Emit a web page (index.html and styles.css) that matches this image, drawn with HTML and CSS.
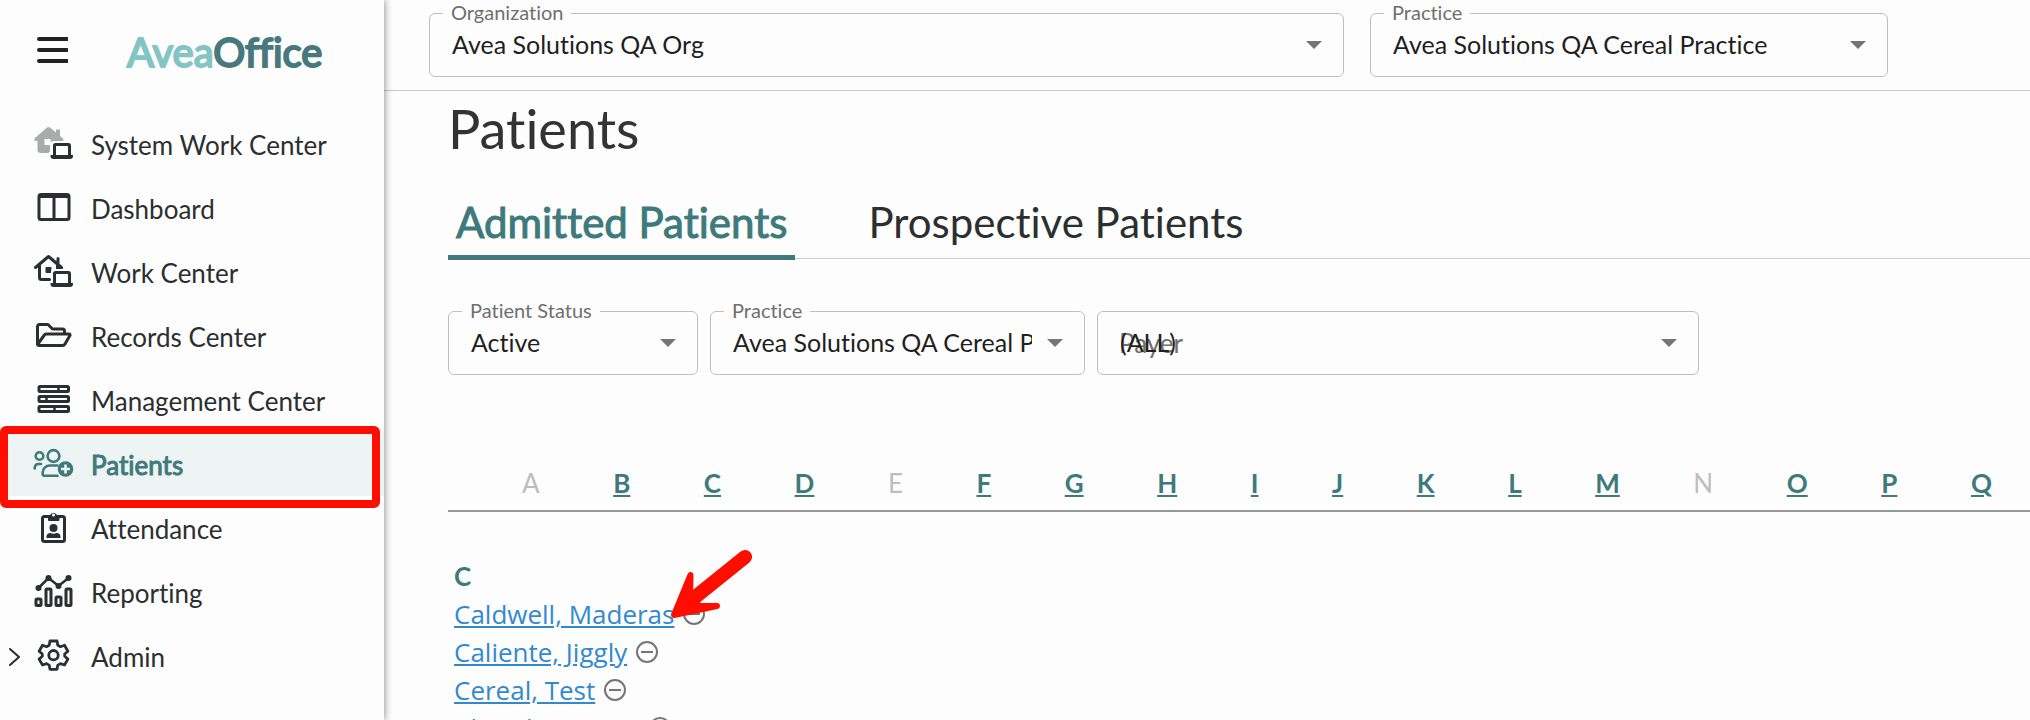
FILE: index.html
```html
<!DOCTYPE html>
<html lang="en">
<head>
  <meta charset="UTF-8" />
  <meta name="viewport" content="width=device-width, initial-scale=1.0"/>
  <title>Patients - AveaOffice</title>
  <link rel="stylesheet" href="styles.css">
</head>
<body>
  <aside class="sidebar">
    <div class="brand">
      <button class="menu-btn" aria-label="Toggle menu">
        <svg width="32" height="28" viewBox="0 0 32 28" fill="none" stroke="#222" stroke-width="4" stroke-linecap="round"><path d="M3 3h28M3 14h28M3 25h28"/></svg>
      </button>
      <a href="#" class="logo">Avea<span>Office</span></a>
    </div>

    <nav class="nav">
      <a href="#">
        <svg class="icon" viewBox="0 0 40 32">
          <path fill="#a9acab" d="M13 .6a2.300 2.300 0 0 1 3 0l6 5V3.500a1 1 0 0 1 1-1h2a1 1 0 0 1 1 1v5.500l3 2.600c1 .9.600 2.400-.8 2.400H19.500a4 4 0 0 0-3 1.500V12h-6v6h5.500v6.500c-.9.400-1.300 1-1.300 1.500H6.500a3 3 0 0 1-3-3v-9H2c-1.600 0-2.500-1.700-1.300-2.700z"/>
          <path fill="none" stroke="#2b2f2f" stroke-width="3" d="M20.500 28V18.500a1 1 0 0 1 1-1h13a1 1 0 0 1 1 1V28"/>
          <path fill="#2b2f2f" d="M16.500 28h22.500v1a3 3 0 0 1-3 3H19.500a3 3 0 0 1-3-3z"/>
        </svg>
        <span>System Work Center</span>
      </a>
      <a href="#">
        <svg class="icon" viewBox="0 0 40 32" fill="none" stroke="currentColor" stroke-width="3">
          <rect x="5" y="3.500" width="30" height="25" rx="2"/>
          <path d="M20 4v24"/>
          <path stroke-width="4" d="M5 5h30"/>
        </svg>
        <span>Dashboard</span>
      </a>
      <a href="#">
        <svg class="icon" viewBox="0 0 40 32">
          <path fill="none" stroke="currentColor" stroke-width="3" stroke-linecap="round" stroke-linejoin="round" d="M1.500 12.500 14.500 1.500l13 11M24 8.500V3.500M5.500 10.500v12a2 2 0 0 0 2 2h8"/>
          <rect x="11.500" y="12" width="6" height="6" rx="1" fill="currentColor"/>
          <path fill="#fdfdfd" d="M17 28V16.500a3 3 0 0 1 3-3h16V28z"/>
          <path fill="currentColor" d="M22 8.500 29.500 14H22z"/>
          <path fill="none" stroke="currentColor" stroke-width="3" d="M20.500 28V18.500a1 1 0 0 1 1-1h13a1 1 0 0 1 1 1V28"/>
          <path fill="currentColor" d="M16.500 28h22.500v1a3 3 0 0 1-3 3H19.500a3 3 0 0 1-3-3z"/>
        </svg>
        <span>Work Center</span>
      </a>
      <a href="#">
        <svg class="icon" viewBox="0 0 40 32" fill="none" stroke="currentColor" stroke-width="3" stroke-linejoin="round">
          <path d="M3.500 25V7.500a2 2 0 0 1 2-2h8.500l4.500 4.500h10a2 2 0 0 1 2 2v3"/>
          <path d="M3.500 25.500 10 16.500a3 3 0 0 1 2.500-1.500H35a1 1 0 0 1 .9 1.600l-4.900 8.400a3 3 0 0 1-2.500 1.500H5a1.500 1.500 0 0 1-1.500-1z"/>
        </svg>
        <span>Records Center</span>
      </a>
      <a href="#">
        <svg class="icon" viewBox="0 0 40 32" fill="none" stroke="currentColor" stroke-width="3">
          <rect x="5" y="3.500" width="29.500" height="5" rx="1"/>
          <rect x="5" y="13.500" width="29.500" height="5" rx="1"/>
          <rect x="5" y="23.500" width="29.500" height="5" rx="1"/>
          <path stroke-width="2.500" d="M24.500 3v6M12.500 13v6M20.500 23v6"/>
        </svg>
        <span>Management Center</span>
      </a>
      <a href="#" class="active">
        <svg class="icon" viewBox="0 0 40 32" fill="none" stroke="currentColor" stroke-width="2.600" stroke-linecap="round" stroke-linejoin="round">
          <circle cx="5.500" cy="9" r="3.800"/>
          <circle cx="19.500" cy="9" r="5.900"/>
          <path d="M.7 21.500v-1.200a4 4 0 0 1 4-3.300H7"/>
          <path d="M23.500 28.700H10.200a1.500 1.500 0 0 1-1.500-1.500v-1.700a7 7 0 0 1 7-7h7.800"/>
          <circle cx="31.500" cy="22" r="7.800" fill="currentColor" stroke="none"/>
          <path stroke="#eef4f4" stroke-linecap="butt" d="M31.500 17.500v9M27 22h9"/>
        </svg>
        <span>Patients</span>
      </a>
      <a href="#">
        <svg class="icon" viewBox="0 0 40 32">
          <rect x="8.500" y="5.500" width="22" height="25" rx="2" fill="none" stroke="currentColor" stroke-width="3"/>
          <path fill="currentColor" d="M14 4h2a4 4 0 0 1 7 0h2.500v5a1 1 0 0 1-1 1H15a1 1 0 0 1-1-1z"/>
          <circle cx="19.500" cy="4" r="1.500" fill="#fdfdfd"/>
          <circle cx="19.500" cy="17" r="4" fill="currentColor"/>
          <path fill="currentColor" d="M12.500 27v-1a4 4 0 0 1 4-4q3 1.500 6 0a4 4 0 0 1 4 4v1z"/>
        </svg>
        <span>Attendance</span>
      </a>
      <a href="#">
        <svg class="icon" viewBox="0 0 40 32" fill="none" stroke="currentColor" stroke-width="3">
          <path stroke-width="2.500" d="M4.500 13 14.500 3l10 8 10-8"/>
          <g fill="currentColor" stroke="none">
            <circle cx="4.500" cy="13" r="3"/><circle cx="14.500" cy="3" r="3"/><circle cx="24.500" cy="11" r="3"/><circle cx="34.500" cy="3" r="3"/>
          </g>
          <rect x="2" y="24" width="5" height="6.500" rx="1"/>
          <rect x="12" y="14" width="5" height="16.500" rx="1"/>
          <rect x="22" y="22" width="5" height="8.500" rx="1"/>
          <rect x="32" y="14" width="5" height="16.500" rx="1"/>
        </svg>
        <span>Reporting</span>
      </a>
      <a href="#">
        <svg class="chevron" viewBox="0 0 12 20" fill="none" stroke="currentColor" stroke-width="2" stroke-linecap="round"><path d="m2 2 9 8-9 8"/></svg>
        <svg class="icon" viewBox="0 0 40 32" fill="none" stroke="currentColor" stroke-width="2.800" stroke-linejoin="round">
          <path d="M16 2h7l.8 4.200 2.700 1.500 4-1.400 3.400 5.900-3.200 2.800v2.300l3.200 2.800-3.400 5.900-4-1.400-2.700 1.500L23 30.300h-7l-.8-4.200-2.700-1.500-4 1.400-3.400-5.900 3.200-2.800V15l-3.200-2.800 3.400-5.900 4 1.400 2.700-1.500z"/>
          <circle cx="19.500" cy="16.200" r="4.700"/>
        </svg>
        <span>Admin</span>
      </a>
    </nav>
  </aside>

  <main class="main">
    <header class="topbar">
      <div class="field">
        <label for="org">Organization</label>
        <select id="org"><option>Avea Solutions QA Org</option></select>
      </div>
      <div class="field">
        <label for="top-practice">Practice</label>
        <select id="top-practice"><option>Avea Solutions QA Cereal Practice</option></select>
      </div>
    </header>

    <div class="content">
      <h1>Patients</h1>

      <div class="tabs" role="tablist">
        <button class="tab selected" role="tab" aria-selected="true">Admitted Patients</button>
        <button class="tab" role="tab" aria-selected="false">Prospective Patients</button>
      </div>

      <div class="filters">
        <div class="field">
          <label for="status">Patient Status</label>
          <select id="status"><option>Active</option></select>
        </div>
        <div class="field">
          <label for="practice">Practice</label>
          <select id="practice"><option>Avea Solutions QA Cereal Practice</option></select>
        </div>
        <div class="field payer">
          <label for="payer">Payer</label>
          <select id="payer"><option>(ALL)</option></select>
        </div>
      </div>

      <div class="letters">
        <span>A</span>
        <a href="#">B</a>
        <a href="#">C</a>
        <a href="#">D</a>
        <span>E</span>
        <a href="#">F</a>
        <a href="#">G</a>
        <a href="#">H</a>
        <a href="#">I</a>
        <a href="#">J</a>
        <a href="#">K</a>
        <a href="#">L</a>
        <a href="#">M</a>
        <span>N</span>
        <a href="#">O</a>
        <a href="#">P</a>
        <a href="#">Q</a>
      </div>

      <section class="group">
        <h2>C</h2>
        <ul>
          <li>
            <a href="#">Caldwell, Maderas</a>
            <button class="remove" aria-label="Remove"></button>
            <!-- Pointer to the first patient -->
            <svg class="arrow" viewBox="0 0 84 70" fill="#ff0d00" stroke="#ff0d00" stroke-linecap="round" stroke-linejoin="round">
              <path stroke-width="14" d="M75 8 24 49"/>
              <path stroke-width="6" d="M4 66 20.500 26 20 50 30 57 47 57z"/>
            </svg>
          </li>
          <li><a href="#">Caliente, Jiggly</a><button class="remove" aria-label="Remove"></button></li>
          <li><a href="#">Cereal, Test</a><button class="remove" aria-label="Remove"></button></li>
          <li><a href="#">Chander, Cesar</a><button class="remove" aria-label="Remove"></button></li>
        </ul>
      </section>
    </div>
  </main>

  <div class="highlight"></div>
</body>
</html>
```
FILE: styles.css
```css
* {
  box-sizing: border-box;
}

html, body {
  margin: 0;
  padding: 0;
  height: 100%;
  overflow: hidden;
}

body {
  display: flex;
  font-family: Lato, sans-serif;
  font-size: 26px;
  font-variant-ligatures: none;
  color: #2b2f2f;
  background: #fdfdfd;
}

button {
  font: inherit;
  font-variant-ligatures: none;
  color: inherit;
  background: none;
  border: none;
  padding: 0;
  cursor: pointer;
}

a {
  color: inherit;
  text-decoration: none;
}

/* Sidebar */
.sidebar {
  position: relative;
  flex: 0 0 384px;
  box-shadow: 0 0 8px rgba(0, 0, 0, 0.5);
  background: #fdfdfd;
  z-index: 2;
}

.brand {
  display: flex;
  align-items: center;
  height: 112px;
  padding: 0 0 13px 36px;
}

.menu-btn svg {
  display: block;
}

.logo {
  margin-left: 59px;
  padding-top: 4px;
  font-size: 40px;
  line-height: 48px;
  color: #83c4c4;
  -webkit-text-stroke: 2px;
}

.logo span {
  color: #47787c;
}

.nav a {
  position: relative;
  display: flex;
  align-items: center;
  gap: 17px;
  height: 64px;
  padding: 2px 0 0 34px;
}

.nav .active {
  color: #3e7a7c;
  background: #eef4f4;
  -webkit-text-stroke: 1px;
}

.icon {
  width: 40px;
  height: 32px;
  margin-bottom: 4px;
  overflow: visible;
}

.chevron {
  position: absolute;
  left: 8px;
  width: 12px;
  height: 20px;
}

.highlight {
  position: absolute;
  top: 426px;
  left: 0;
  width: 380px;
  height: 82px;
  border: 8px solid #ff0d00;
  border-radius: 6px;
  z-index: 3;
}

/* Header */
.main {
  flex: 1;
  min-width: 0;
}

.topbar {
  display: grid;
  grid-template-columns: 915fr 518fr;
  gap: 26px;
  height: 91px;
  padding: 13px 142px 0 45px;
  border-bottom: 1px solid #c8cccb;
}

.field {
  position: relative;
  height: 64px;
}

.field label {
  position: absolute;
  top: -13px;
  left: 14px;
  padding: 0 8px;
  font-size: 20px;
  line-height: 24px;
  color: #6f6f6f;
  background: #fdfdfd;
}

.field select {
  appearance: none;
  width: 100%;
  height: 100%;
  padding: 0 52px 2px 22px;
  border: 1px solid #bfbfbf;
  border-radius: 6px;
  font: inherit;
  font-size: 25px;
  font-variant-ligatures: none;
  color: #1f1f1f;
  background: none;
}

.field::after {
  content: "";
  position: absolute;
  top: 28px;
  right: 22px;
  border: 8px solid transparent;
  border-top-color: #757575;
  border-bottom: none;
  pointer-events: none;
}

.payer label {
  top: 16px;
  font-size: 26px;
  line-height: 32px;
  background: none;
}

.payer select {
  position: relative;
}

/* Page content */
.content {
  padding-left: 64px;
}

h1 {
  margin: 0;
  padding: 6px 0 0;
  font-size: 54px;
  font-weight: 400;
  line-height: 64px;
  color: #333;
}

.tabs {
  display: flex;
  gap: 65px;
  height: 98px;
  padding-top: 32px;
  border-bottom: 1px solid #c5d0cf;
}

.tab {
  height: 67px;
  padding: 0 8px 5px;
  border-bottom: 5px solid transparent;
  font-size: 42px;
}

.tab.selected {
  color: #3e7a7c;
  border-color: #3e7a7c;
  -webkit-text-stroke: 1px;
}

.filters {
  display: grid;
  grid-template-columns: 250fr 375fr 602fr;
  gap: 12px;
  padding: 52px 331px 0 0;
}

.letters {
  display: flex;
  justify-content: space-between;
  height: 137px;
  padding: 92px 38px 0 74px;
  border-bottom: 2px solid #959a99;
  line-height: 32px;
}

.letters span {
  color: #bdbdbd;
}

.letters a {
  color: #3e7a7c;
  font-weight: 700;
  text-decoration: underline;
}

/* Patient list */
.group {
  padding: 45px 0 0 6px;
}

h2 {
  margin: 0;
  font-size: 26px;
  font-weight: 700;
  line-height: 38px;
  color: #3e7a7c;
}

.group ul {
  list-style: none;
  margin: 0;
  padding: 0;
  font-family: "Open Sans", sans-serif;
}

.group li {
  position: relative;
  display: flex;
  align-items: center;
  gap: 9px;
  height: 38px;
  line-height: 38px;
}

.group li a {
  color: #3389d0;
  text-decoration: underline;
}

.remove {
  display: grid;
  place-items: center;
  width: 22px;
  height: 22px;
  border: 2px solid #757575;
  border-radius: 50%;
}

.remove::before {
  content: "";
  width: 12px;
  height: 2px;
  background: #757575;
}

.arrow {
  position: absolute;
  bottom: 14px;
  left: 216px;
  width: 84px;
  height: 70px;
}
```
